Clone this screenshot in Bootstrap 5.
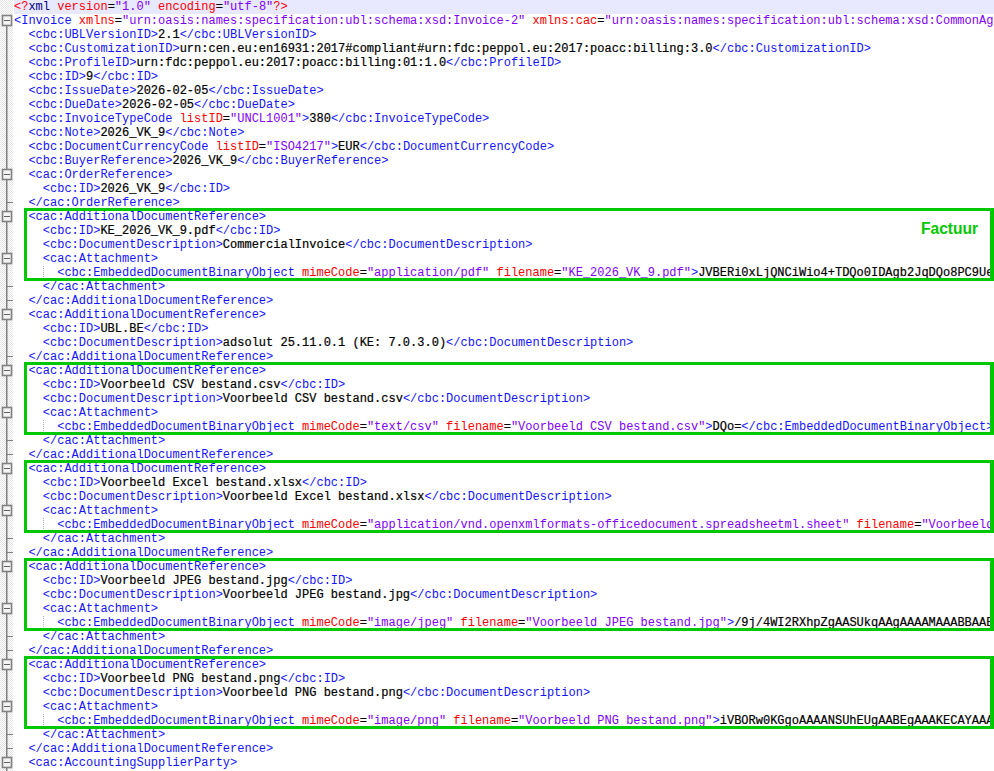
<!doctype html>
<html lang="en"><head><meta charset="utf-8"><title>Invoice XML</title>
<link href="https://cdn.jsdelivr.net/npm/bootstrap@5.3.0/dist/css/bootstrap.min.css" rel="stylesheet">
<style>
html,body{height:771px;overflow:hidden;background:#fff}
.xv-wrap{width:994px;height:771px;overflow:hidden;position:relative}
.xv-gutter{width:14px;flex:none;height:771px;display:block}
.xv-code{flex:1 1 auto;min-width:0;overflow:hidden;font-family:"Liberation Mono",monospace;font-size:12px;color:#000}
.xv-line{height:14px;line-height:14px;overflow:hidden;white-space:pre;-webkit-text-stroke:.2px #000}
.xv-first{background:#e8e8ff}
.xv-guide{background:repeating-linear-gradient(#b0b0b0 0 1px,transparent 1px 2px) 29px 0/1px 100% no-repeat}
.t,.at,.v,.xn{-webkit-text-stroke:0}
.t{color:#1414ff}.at{color:#ff0000}.v{color:#8000ff}.xn{color:#000080}
.xv-box{position:absolute;left:24px;width:970px;height:73px;border:3px solid #00c800;border-right-width:4px;pointer-events:none}
.xv-b1{top:208px}.xv-b2{top:362px}.xv-b3{top:460px}.xv-b4{top:558px}.xv-b5{top:656px}
.xv-label{position:absolute;left:921px;top:220px;font:bold 15.6px/18px "Liberation Sans",sans-serif;color:#00c800}
</style></head><body>
<div class="xv-wrap d-flex">
<svg class="xv-gutter" viewBox="0 0 14 771" width="14" height="771"><defs><pattern id="hatch" width="2" height="2" patternUnits="userSpaceOnUse"><rect width="2" height="2" fill="#fff"/><rect width="1" height="1" fill="#e4e4e4"/><rect x="1" y="1" width="1" height="1" fill="#e4e4e4"/></pattern><g id="op"><rect x="2.5" y="1.5" width="9" height="10" fill="#f4f4f4" stroke="#808080" stroke-width="1.6"/><path d="M4 6.5H10" stroke="#606060"/></g></defs><rect width="13" height="771" fill="url(#hatch)"/><path d="M6.75 26V771" stroke="#808080" stroke-width="1.5"/><path d="M7 202.5h6M7 286.5h6M7 300.5h6M7 356.5h6M7 440.5h6M7 454.5h6M7 538.5h6M7 552.5h6M7 636.5h6M7 650.5h6M7 734.5h6M7 748.5h6" stroke="#808080" stroke-width="1.2"/><use href="#op" y="14"/><use href="#op" y="168"/><use href="#op" y="210"/><use href="#op" y="252"/><use href="#op" y="308"/><use href="#op" y="364"/><use href="#op" y="406"/><use href="#op" y="462"/><use href="#op" y="504"/><use href="#op" y="560"/><use href="#op" y="602"/><use href="#op" y="658"/><use href="#op" y="700"/><use href="#op" y="756"/></svg>
<div class="xv-code"><div class="xv-line xv-first"><span class="at">&lt;?</span><span class="xn">xml </span><span class="at">version</span>=<span class="v">"1.0"</span> <span class="at">encoding</span>=<span class="v">"utf-8"</span><span class="at">?&gt;</span></div>
<div class="xv-line"><span class="t">&lt;Invoice </span><span class="at">xmlns</span>=<span class="v">"urn:oasis:names:specification:ubl:schema:xsd:Invoice-2"</span> <span class="at">xmlns:cac</span>=<span class="v">"urn:oasis:names:specification:ubl:schema:xsd:CommonAg</span></div>
<div class="xv-line">  <span class="t">&lt;cbc:UBLVersionID&gt;</span>2.1<span class="t">&lt;/cbc:UBLVersionID&gt;</span></div>
<div class="xv-line">  <span class="t">&lt;cbc:CustomizationID&gt;</span>urn:cen.eu:en16931:2017#compliant#urn:fdc:peppol.eu:2017:poacc:billing:3.0<span class="t">&lt;/cbc:CustomizationID&gt;</span></div>
<div class="xv-line">  <span class="t">&lt;cbc:ProfileID&gt;</span>urn:fdc:peppol.eu:2017:poacc:billing:01:1.0<span class="t">&lt;/cbc:ProfileID&gt;</span></div>
<div class="xv-line">  <span class="t">&lt;cbc:ID&gt;</span>9<span class="t">&lt;/cbc:ID&gt;</span></div>
<div class="xv-line">  <span class="t">&lt;cbc:IssueDate&gt;</span>2026-02-05<span class="t">&lt;/cbc:IssueDate&gt;</span></div>
<div class="xv-line">  <span class="t">&lt;cbc:DueDate&gt;</span>2026-02-05<span class="t">&lt;/cbc:DueDate&gt;</span></div>
<div class="xv-line">  <span class="t">&lt;cbc:InvoiceTypeCode </span><span class="at">listID</span>=<span class="v">"UNCL1001"</span><span class="t">&gt;</span>380<span class="t">&lt;/cbc:InvoiceTypeCode&gt;</span></div>
<div class="xv-line">  <span class="t">&lt;cbc:Note&gt;</span>2026_VK_9<span class="t">&lt;/cbc:Note&gt;</span></div>
<div class="xv-line">  <span class="t">&lt;cbc:DocumentCurrencyCode </span><span class="at">listID</span>=<span class="v">"ISO4217"</span><span class="t">&gt;</span>EUR<span class="t">&lt;/cbc:DocumentCurrencyCode&gt;</span></div>
<div class="xv-line">  <span class="t">&lt;cbc:BuyerReference&gt;</span>2026_VK_9<span class="t">&lt;/cbc:BuyerReference&gt;</span></div>
<div class="xv-line">  <span class="t">&lt;cac:OrderReference&gt;</span></div>
<div class="xv-line">    <span class="t">&lt;cbc:ID&gt;</span>2026_VK_9<span class="t">&lt;/cbc:ID&gt;</span></div>
<div class="xv-line">  <span class="t">&lt;/cac:OrderReference&gt;</span></div>
<div class="xv-line">  <span class="t">&lt;cac:AdditionalDocumentReference&gt;</span></div>
<div class="xv-line">    <span class="t">&lt;cbc:ID&gt;</span>KE_2026_VK_9.pdf<span class="t">&lt;/cbc:ID&gt;</span></div>
<div class="xv-line">    <span class="t">&lt;cbc:DocumentDescription&gt;</span>CommercialInvoice<span class="t">&lt;/cbc:DocumentDescription&gt;</span></div>
<div class="xv-line">    <span class="t">&lt;cac:Attachment&gt;</span></div>
<div class="xv-line xv-guide">      <span class="t">&lt;cbc:EmbeddedDocumentBinaryObject </span><span class="at">mimeCode</span>=<span class="v">"application/pdf"</span> <span class="at">filename</span>=<span class="v">"KE_2026_VK_9.pdf"</span><span class="t">&gt;</span>JVBERi0xLjQNCiWio4+TDQo0IDAgb2JqDQo8PC9Ue</div>
<div class="xv-line">    <span class="t">&lt;/cac:Attachment&gt;</span></div>
<div class="xv-line">  <span class="t">&lt;/cac:AdditionalDocumentReference&gt;</span></div>
<div class="xv-line">  <span class="t">&lt;cac:AdditionalDocumentReference&gt;</span></div>
<div class="xv-line">    <span class="t">&lt;cbc:ID&gt;</span>UBL.BE<span class="t">&lt;/cbc:ID&gt;</span></div>
<div class="xv-line">    <span class="t">&lt;cbc:DocumentDescription&gt;</span>adsolut 25.11.0.1 (KE: 7.0.3.0)<span class="t">&lt;/cbc:DocumentDescription&gt;</span></div>
<div class="xv-line">  <span class="t">&lt;/cac:AdditionalDocumentReference&gt;</span></div>
<div class="xv-line">  <span class="t">&lt;cac:AdditionalDocumentReference&gt;</span></div>
<div class="xv-line">    <span class="t">&lt;cbc:ID&gt;</span>Voorbeeld CSV bestand.csv<span class="t">&lt;/cbc:ID&gt;</span></div>
<div class="xv-line">    <span class="t">&lt;cbc:DocumentDescription&gt;</span>Voorbeeld CSV bestand.csv<span class="t">&lt;/cbc:DocumentDescription&gt;</span></div>
<div class="xv-line">    <span class="t">&lt;cac:Attachment&gt;</span></div>
<div class="xv-line xv-guide">      <span class="t">&lt;cbc:EmbeddedDocumentBinaryObject </span><span class="at">mimeCode</span>=<span class="v">"text/csv"</span> <span class="at">filename</span>=<span class="v">"Voorbeeld CSV bestand.csv"</span><span class="t">&gt;</span>DQo=<span class="t">&lt;/cbc:EmbeddedDocumentBinaryObject&gt;</span></div>
<div class="xv-line">    <span class="t">&lt;/cac:Attachment&gt;</span></div>
<div class="xv-line">  <span class="t">&lt;/cac:AdditionalDocumentReference&gt;</span></div>
<div class="xv-line">  <span class="t">&lt;cac:AdditionalDocumentReference&gt;</span></div>
<div class="xv-line">    <span class="t">&lt;cbc:ID&gt;</span>Voorbeeld Excel bestand.xlsx<span class="t">&lt;/cbc:ID&gt;</span></div>
<div class="xv-line">    <span class="t">&lt;cbc:DocumentDescription&gt;</span>Voorbeeld Excel bestand.xlsx<span class="t">&lt;/cbc:DocumentDescription&gt;</span></div>
<div class="xv-line">    <span class="t">&lt;cac:Attachment&gt;</span></div>
<div class="xv-line xv-guide">      <span class="t">&lt;cbc:EmbeddedDocumentBinaryObject </span><span class="at">mimeCode</span>=<span class="v">"application/vnd.openxmlformats-officedocument.spreadsheetml.sheet"</span> <span class="at">filename</span>=<span class="v">"Voorbeeld</span></div>
<div class="xv-line">    <span class="t">&lt;/cac:Attachment&gt;</span></div>
<div class="xv-line">  <span class="t">&lt;/cac:AdditionalDocumentReference&gt;</span></div>
<div class="xv-line">  <span class="t">&lt;cac:AdditionalDocumentReference&gt;</span></div>
<div class="xv-line">    <span class="t">&lt;cbc:ID&gt;</span>Voorbeeld JPEG bestand.jpg<span class="t">&lt;/cbc:ID&gt;</span></div>
<div class="xv-line">    <span class="t">&lt;cbc:DocumentDescription&gt;</span>Voorbeeld JPEG bestand.jpg<span class="t">&lt;/cbc:DocumentDescription&gt;</span></div>
<div class="xv-line">    <span class="t">&lt;cac:Attachment&gt;</span></div>
<div class="xv-line xv-guide">      <span class="t">&lt;cbc:EmbeddedDocumentBinaryObject </span><span class="at">mimeCode</span>=<span class="v">"image/jpeg"</span> <span class="at">filename</span>=<span class="v">"Voorbeeld JPEG bestand.jpg"</span><span class="t">&gt;</span>/9j/4WI2RXhpZgAASUkqAAgAAAAMAAABBAAB</div>
<div class="xv-line">    <span class="t">&lt;/cac:Attachment&gt;</span></div>
<div class="xv-line">  <span class="t">&lt;/cac:AdditionalDocumentReference&gt;</span></div>
<div class="xv-line">  <span class="t">&lt;cac:AdditionalDocumentReference&gt;</span></div>
<div class="xv-line">    <span class="t">&lt;cbc:ID&gt;</span>Voorbeeld PNG bestand.png<span class="t">&lt;/cbc:ID&gt;</span></div>
<div class="xv-line">    <span class="t">&lt;cbc:DocumentDescription&gt;</span>Voorbeeld PNG bestand.png<span class="t">&lt;/cbc:DocumentDescription&gt;</span></div>
<div class="xv-line">    <span class="t">&lt;cac:Attachment&gt;</span></div>
<div class="xv-line xv-guide">      <span class="t">&lt;cbc:EmbeddedDocumentBinaryObject </span><span class="at">mimeCode</span>=<span class="v">"image/png"</span> <span class="at">filename</span>=<span class="v">"Voorbeeld PNG bestand.png"</span><span class="t">&gt;</span>iVBORw0KGgoAAAANSUhEUgAABEgAAAKECAYAAA</div>
<div class="xv-line">    <span class="t">&lt;/cac:Attachment&gt;</span></div>
<div class="xv-line">  <span class="t">&lt;/cac:AdditionalDocumentReference&gt;</span></div>
<div class="xv-line">  <span class="t">&lt;cac:AccountingSupplierParty&gt;</span></div></div>
<div class="xv-box xv-b1"></div><div class="xv-box xv-b2"></div><div class="xv-box xv-b3"></div><div class="xv-box xv-b4"></div><div class="xv-box xv-b5"></div>
<div class="xv-label">Factuur</div>
</div></body></html>
